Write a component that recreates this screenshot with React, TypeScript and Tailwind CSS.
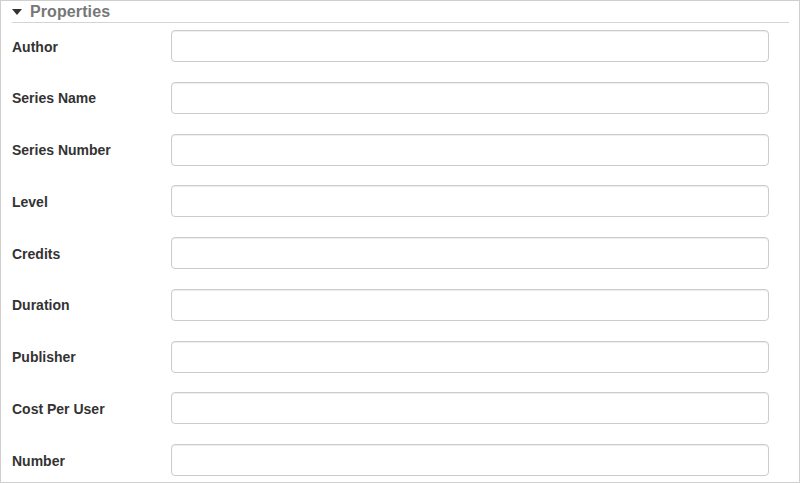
const fields = [
  'Author',
  'Series Name',
  'Series Number',
  'Level',
  'Credits',
  'Duration',
  'Publisher',
  'Cost Per User',
  'Number',
];

const App = () => (
  <div
    className="w-[800px] h-[483px] bg-white border border-[#cfcfcf] overflow-hidden"
    style={{ fontFamily: '"Liberation Sans", Arial, sans-serif' }}
  >
    <div className="ml-[11px] mr-[10px] h-[22px] border-b border-[#d4d4d4] flex items-center gap-[8px]">
      <svg width="10" height="6" viewBox="0 0 10 6" className="mt-[1px]">
        <path d="M0 0 L10 0 L5 6 Z" fill="#333" />
      </svg>
      <span className="text-[16px] font-bold text-[#777] leading-none tracking-[0.1px]">Properties</span>
    </div>
    <div className="flex flex-col gap-[19.75px] pt-[7px] pl-[11px] pr-[30px]">
      {fields.map((f) => (
        <div key={f} className="flex items-center">
          <label className="w-[159px] shrink-0 pt-[2px] text-[14px] font-bold text-[#333]">{f}</label>
          <input
            type="text"
            className="flex-1 h-[32px] rounded-[4px] border border-[#ccc] bg-white px-3 text-[14px] outline-none shadow-[inset_0_1px_1px_rgba(0,0,0,0.075)]"
          />
        </div>
      ))}
    </div>
  </div>
);

export default App;
